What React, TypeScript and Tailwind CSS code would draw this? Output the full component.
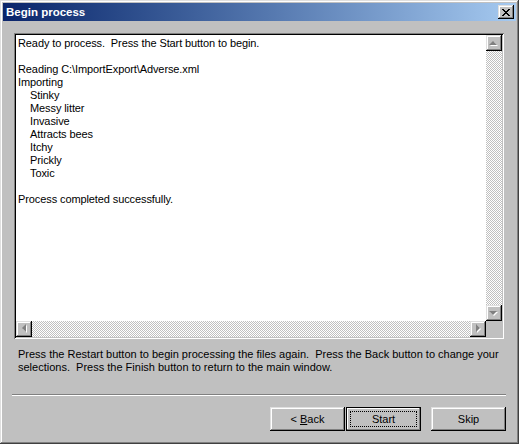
import React from "react"

const raised =
  "shadow-[inset_-1px_-1px_#000,inset_1px_1px_#dfdfdf,inset_-2px_-2px_#808080,inset_2px_2px_#fff]"

function Arrow({ dir }: { dir: "up" | "down" | "left" | "right" }) {
  // disabled arrow: gray triangle with a white offset shadow
  const shapes: Record<string, string> = {
    up: "4,1 8,5 0,5",
    down: "0,1 8,1 4,5",
    left: "5,0 5,8 1,4",
    right: "1,0 1,8 5,4",
  }
  const size = dir === "up" || dir === "down" ? { w: 10, h: 7 } : { w: 7, h: 10 }
  return (
    <svg width={size.w} height={size.h} viewBox={`0 0 ${size.w} ${size.h}`}>
      <polygon points={shapes[dir]} fill="#fff" transform="translate(1,1)" />
      <polygon points={shapes[dir]} fill="#808080" />
    </svg>
  )
}

function ScrollButton({ dir }: { dir: "up" | "down" | "left" | "right" }) {
  return (
    <div className={`w-4 h-4 bg-[#c0c0c0] flex items-center justify-center ${raised}`}>
      <Arrow dir={dir} />
    </div>
  )
}

const track = "bg-[repeating-conic-gradient(#c0c0c0_0_25%,#fff_0_50%)] bg-[length:2px_2px]"

const logLines: { text: string; indent?: boolean }[] = [
  { text: "Ready to process.\u00a0 Press the Start button to begin." },
  { text: "" },
  { text: "Reading C:\\ImportExport\\Adverse.xml" },
  { text: "Importing" },
  { text: "Stinky", indent: true },
  { text: "Messy litter", indent: true },
  { text: "Invasive", indent: true },
  { text: "Attracts bees", indent: true },
  { text: "Itchy", indent: true },
  { text: "Prickly", indent: true },
  { text: "Toxic", indent: true },
  { text: "" },
  { text: "Process completed successfully." },
]

export default function App() {
  return (
    <div
      className="w-[519px] h-[444px] bg-[#c0c0c0] p-[3px] flex flex-col text-[11px] leading-[13px] text-black shadow-[inset_-1px_-1px_#404040,inset_1px_1px_#dfdfdf,inset_-2px_-2px_#808080,inset_2px_2px_#fff]"
      style={{ fontFamily: '"Liberation Sans", Arial, sans-serif' }}
    >
      {/* Title bar */}
      <div className="h-[18px] flex items-center pl-[3px] pr-[2px] bg-linear-to-r from-[#0a246a] to-[#a6caf0]">
        <span className="flex-1 text-white font-bold text-[11.5px]">Begin process</span>
        <div className={`w-4 h-[14px] bg-[#c0c0c0] flex items-center justify-center ${raised}`}>
          <svg width="8" height="7" viewBox="0 0 8 7">
            <path d="M0 0h2v1h1v1h2V1h1V0h2v1H7v1H6v1H5v1h1v1h1v1h1v1H6V6H5V5H3v1H2v1H0V6h1V5h1V4h1V3H2V2H1V1H0z" fill="#000" />
          </svg>
        </div>
      </div>

      {/* Body */}
      <div className="flex flex-col pl-[9px] mt-3">
        {/* Log box */}
        <div className="ml-[2px] w-[490px] h-[306px] p-[2px] bg-white shadow-[inset_1px_1px_#808080,inset_-1px_-1px_#fff,inset_2px_2px_#000,inset_-2px_-2px_#c0c0c0]">
          <div className="grid grid-cols-[1fr_16px] grid-rows-[1fr_16px] h-full">
            <div className="pl-[2px] pt-[2px] overflow-hidden whitespace-pre tracking-[-0.1px]">
              {logLines.map((l, i) => (
                <div key={i} className={`h-[13px] ${l.indent ? "pl-3" : ""}`}>
                  {l.text}
                </div>
              ))}
            </div>
            <div className="flex flex-col">
              <ScrollButton dir="up" />
              <div className={`flex-1 ${track}`} />
              <ScrollButton dir="down" />
            </div>
            <div className="flex">
              <ScrollButton dir="left" />
              <div className={`flex-1 ${track}`} />
              <ScrollButton dir="right" />
            </div>
            <div className="bg-[#c0c0c0]" />
          </div>
        </div>

        {/* Help text */}
        <p className="ml-[6px] mt-[9px] w-[492px]">
          Press the Restart button to begin processing the files again.&nbsp; Press the Back button to change your
          selections.&nbsp; Press the Finish button to return to the main window.
        </p>

        {/* Separator */}
        <div className="mt-5 w-[494px] h-[2px] border-t border-t-[#808080] border-b border-b-white" />

        {/* Buttons */}
        <div className="mt-[11px] flex pl-[258px]">
          <button className={`w-[75px] h-6 bg-[#c0c0c0] flex items-center justify-center ${raised}`}>
            &lt; <span className="underline ml-[3px]">B</span>ack
          </button>
          <button className="ml-px w-[75px] h-6 bg-[#c0c0c0] border border-black p-[3px] shadow-[inset_-1px_-1px_#808080,inset_1px_1px_#fff]">
            <div className="h-full border border-dotted border-black flex items-center justify-center">Start</div>
          </button>
          <button className={`ml-[10px] w-[75px] h-6 bg-[#c0c0c0] flex items-center justify-center ${raised}`}>
            Skip
          </button>
        </div>
      </div>
    </div>
  )
}
